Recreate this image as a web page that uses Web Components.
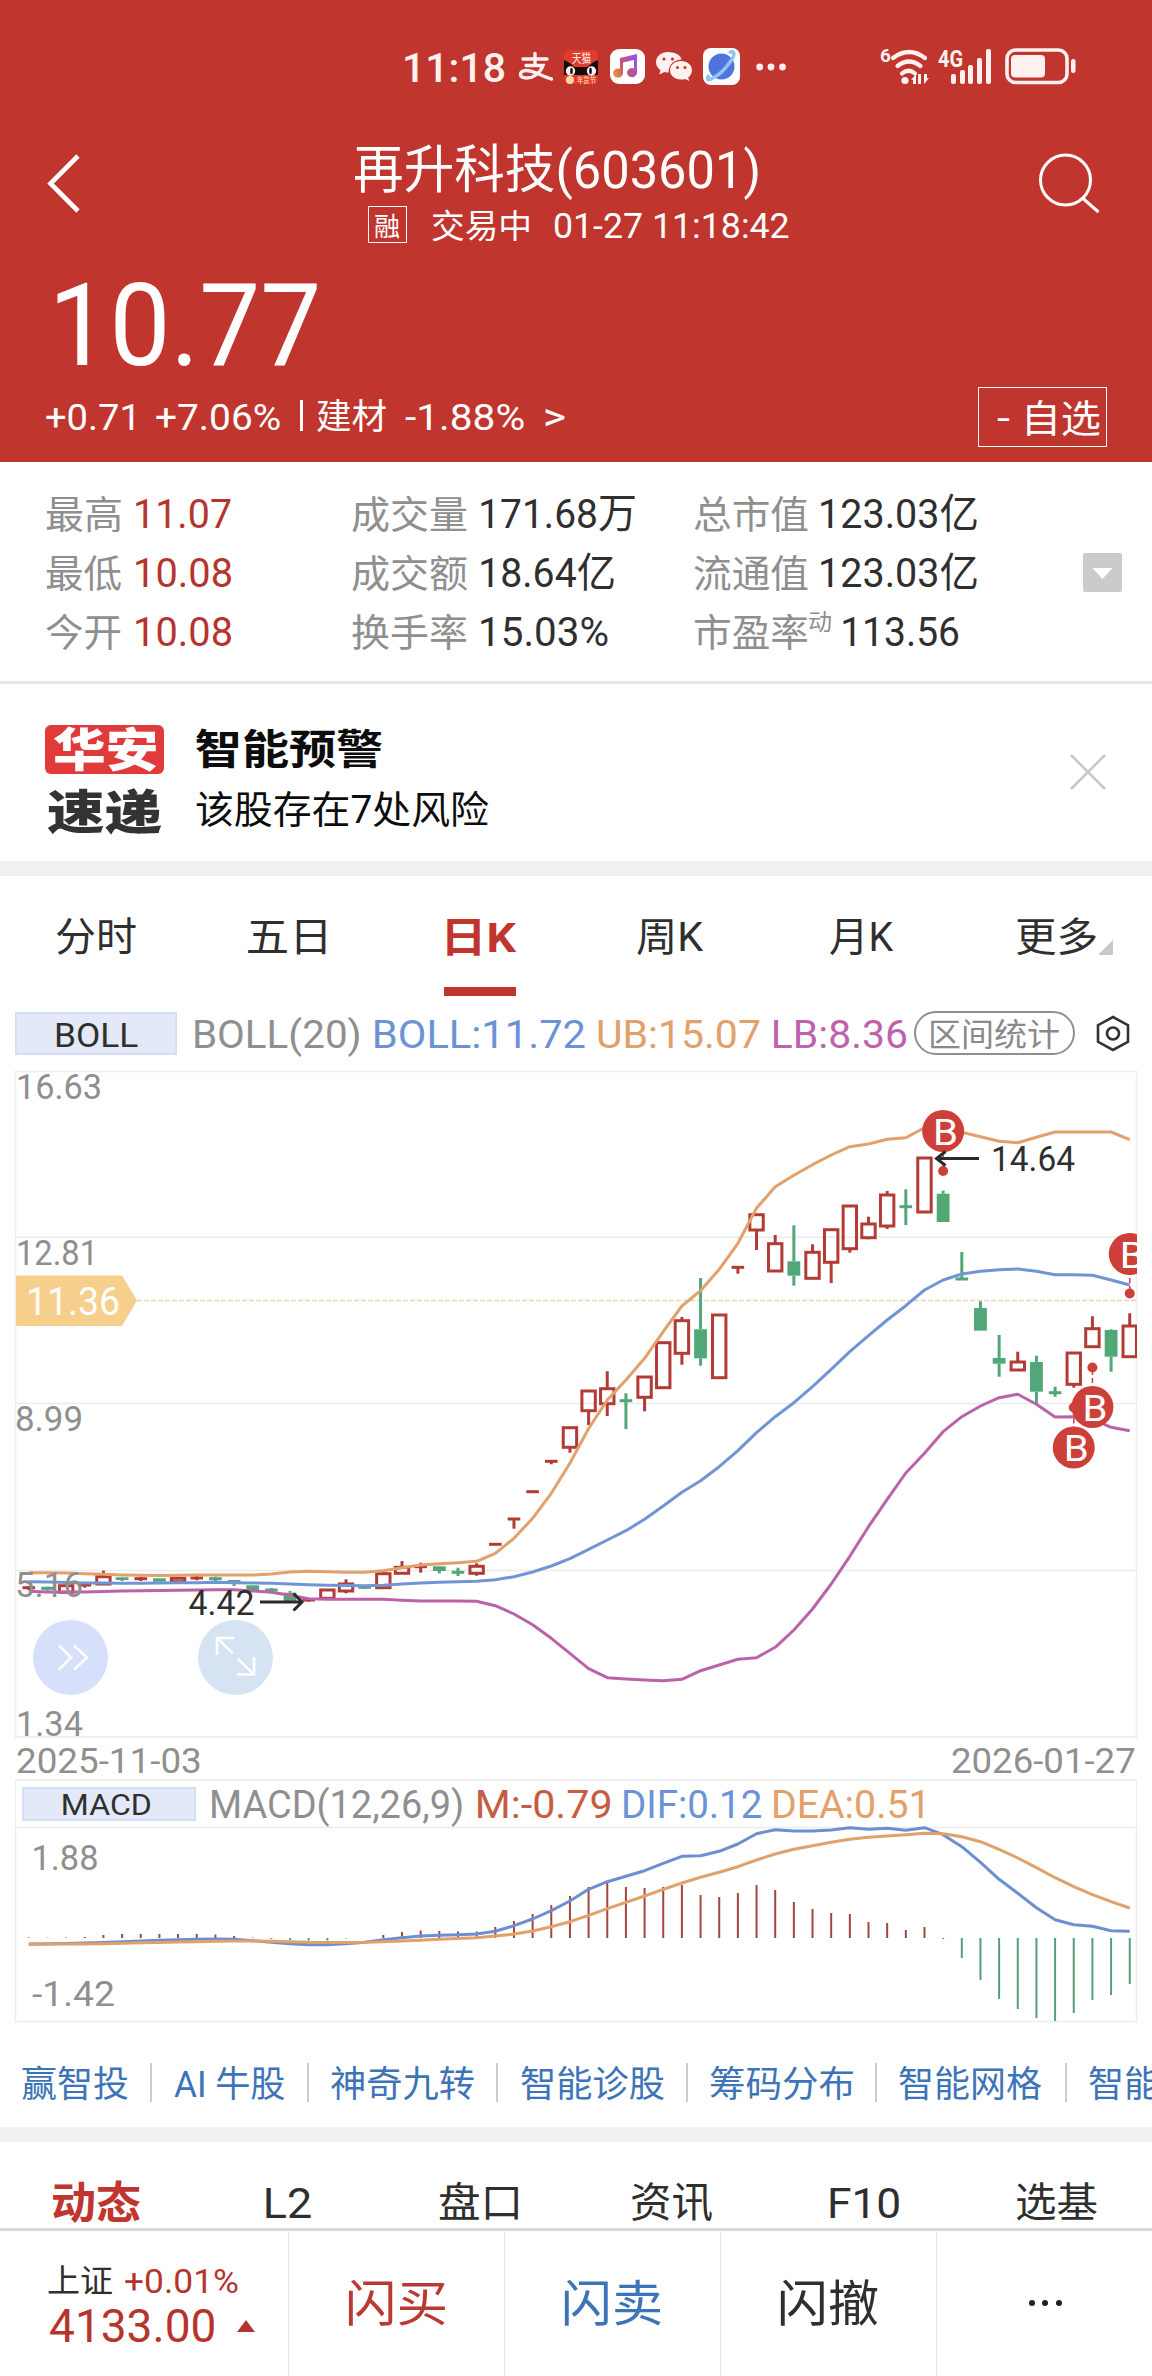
<!DOCTYPE html>
<html lang="zh-CN">
<head>
<meta charset="utf-8">
<title>再升科技(603601)</title>
<style>
  html,body{margin:0;padding:0;background:#fff}
  body{width:1152px;height:2376px;overflow:hidden;font-family:Roboto,"Noto Sans CJK SC",sans-serif;color:#2f2f2f}
</style>
</head>
<body>
<stock-page></stock-page>
<script>
const BASE = `*,*::before,*::after{box-sizing:border-box} svg{display:block;flex:none;overflow:visible} .row{display:flex;align-items:center}`;
const measure = document.createElement("canvas").getContext("2d");

// Shorthand for a fitted label: text, ink width, font size, left gap, extra style.
const t = (text, w, size, gap = 0, css = "") =>
  `<fit-text w="${w}" style="font-size:${size}px;margin-left:${gap}px;${css}">${text}</fit-text>`;

/** <fit-text w="120"> — single line of text whose ink fills exactly w pixels. */
class FitText extends HTMLElement {
  constructor() { super(); this.attachShadow({ mode: "open" }); }
  connectedCallback() {
    this.shadowRoot.innerHTML = `
      <style>
        :host{display:block;flex:none;line-height:1;height:1em;width:var(--w)}
        span{display:block;width:max-content;white-space:nowrap;transform-origin:0 50%}
      </style><span><slot></slot></span>`;
    const w = +this.getAttribute("w");
    const cs = getComputedStyle(this);
    measure.font = `${cs.fontWeight} ${cs.fontSize} ${cs.fontFamily}`;
    const m = measure.measureText(this.textContent);
    const ink = m.actualBoundingBoxLeft + m.actualBoundingBoxRight;
    this.style.setProperty("--w", w + "px");
    // 1.5px down: Roboto sits a little high in its line box
    this.shadowRoot.querySelector("span").style.transform = `translateY(1.5px) scaleX(${w / ink}) translateX(${m.actualBoundingBoxLeft}px)`;
  }
}
customElements.define("fit-text", FitText);

class Block extends HTMLElement {
  constructor() { super(); this.attachShadow({ mode: "open" }); }
  connectedCallback() { this.shadowRoot.innerHTML = `<style>${BASE}${this.css()}</style>${this.html()}`; }
  css() { return ":host{display:block}"; }
  html() { return "<slot></slot>"; }
}

class StatusBar extends Block {
  css() { return `:host{display:block;height:134px;color:#fff1ef} svg{width:1152px;height:134px}`; }
  html() {
    return `<svg viewBox="0 0 1152 134" fill="#fff1ef">
      <text x="402" y="81.500" font-size="41" font-weight="500" textLength="104" lengthAdjust="spacingAndGlyphs">11:18</text>
      <g fill="none" stroke="#fff1ef" stroke-width="3.4" stroke-linecap="round">
        <path d="M523 59h24M535 53.500v12M526 65.500h17c-3 8-10 12.500-16 12.500c-9 0-8-7.500-1-7.500c8 0 16 6 25.500 8.500" /></g>
      <g><rect x="564" y="50" width="34" height="34" rx="5" fill="#e23b2c"/>
        <text x="572" y="63" font-size="12" textLength="19" lengthAdjust="spacingAndGlyphs">天猫</text>
        <path d="M564 60q7 3 10 7h14q3-4 10-7v15h-34z" fill="#130d0d"/>
        <circle cx="570.500" cy="71" r="4.700"/><circle cx="591.500" cy="71" r="4.700"/>
        <ellipse cx="571.500" cy="71" rx="1.300" ry="3.200" fill="#111"/><ellipse cx="590.500" cy="71" rx="1.300" ry="3.200" fill="#111"/>
        <circle cx="570" cy="80" r="4" fill="#f6d9a0"/>
        <text x="577" y="82.500" font-size="7.500" fill="#ffe9c9" textLength="19" lengthAdjust="spacingAndGlyphs">年货节</text></g>
      <g><defs><linearGradient id="mu" x1="0" y1="1" x2="1" y2="0.500"><stop offset="0" stop-color="#f0a040"/><stop offset=".5" stop-color="#c8546a"/><stop offset="1" stop-color="#a64fd8"/></linearGradient></defs>
        <rect x="610" y="49" width="35" height="35" rx="9" fill="#fff"/>
        <path d="M620 58l17-4v19a5 4.500 0 1 1-3-4.500v-8.500l-11 2.500v11a5 4.500 0 1 1-3-4.500z" fill="url(#mu)"/></g>
      <g><path d="M668 52c-7 0-12 4.600-12 10.300c0 3.300 1.800 6 4.500 7.900l-1.200 4.200l5-2.500c2 .5 3 .5 4.200.5c0-8 6-13 13-13c-1-4.500-6.500-7.400-13.500-7.400z"/>
        <path d="M681 61c-6.300 0-11 4-11 9.300s4.700 9.200 11 9.200c1.500 0 2.900-.2 4.200-.6l4 2.100l-1-3.500c2.400-1.700 3.800-4.300 3.800-7.200c0-5.300-4.700-9.300-11-9.300z"/>
        <g fill="#c0352e"><circle cx="664" cy="59" r="1.600"/><circle cx="672.500" cy="59" r="1.600"/><circle cx="677.500" cy="67.500" r="1.500"/><circle cx="685" cy="67.500" r="1.500"/></g></g>
      <g><rect x="703" y="48" width="37" height="37" rx="8" fill="#fff"/>
        <circle cx="721.500" cy="66.500" r="13" fill="#4f74dc"/>
        <path d="M709 75q-4 7 3 3.500q10-5 17-15q7-9 4-11.500q-1-1-4 1" fill="none" stroke="#8fc4f5" stroke-width="3.600"/></g>
      <circle cx="759.700" cy="67" r="3.400"/><circle cx="771" cy="67" r="3.400"/><circle cx="782.500" cy="67" r="3.400"/>
      <text x="880" y="62" font-size="19" font-weight="700">6</text>
      <g fill="none" stroke="#fff1ef" stroke-width="4.200" stroke-linecap="round">
        <path d="M893 58q16-12 32 0M897.500 66q11.500-9 23 0M902 73.500q6.500-5.500 13 0"/></g>
      <circle cx="905" cy="80.500" r="3.600"/>
      <path d="M911 80l5-6v10h-3v-4zM929 78l-5 6v-10h3v4zM918 74h3v10h-3z"/>
      <text x="938" y="66.500" font-size="23" font-weight="700" textLength="25" lengthAdjust="spacingAndGlyphs">4G</text>
      <g><rect x="951" y="74" width="5" height="10" rx="2"/><rect x="960" y="70" width="5" height="14" rx="2"/><rect x="968" y="65" width="5" height="19" rx="2"/><rect x="977" y="58" width="5" height="26" rx="2"/><rect x="986" y="49" width="5" height="35" rx="2"/></g>
      <rect x="1007" y="50" width="60" height="32.500" rx="8.500" fill="none" stroke="#fff1ef" stroke-width="3.600"/>
      <rect x="1011" y="55" width="34" height="22.500" rx="4"/><rect x="1071" y="59" width="4.500" height="14" rx="2.200"/>
    </svg>`;
  }
}
customElements.define("status-bar", StatusBar);

class StockHeader extends Block {
  css() {
    return `:host{display:block;height:462px;background:#c0352e;color:#fff}
      .bar{height:114px;align-items:flex-start}
      .mid{width:805px;padding-left:276px}
      .title{height:70px}.sub{height:41px}
      .tag{width:39px;height:37px;border:1px solid #fff;justify-content:center}
      .price{height:133px;padding:17px 0 0 57px}
      .chg{height:68px;padding-left:46px}
      .pick{width:129px;height:60px;margin:4px 0 0 auto;margin-right:45px;border:1px solid #fff}`;
  }
  html() {
    return `<status-bar></status-bar>
      <div class="row bar">
        <svg width="80" height="90" viewBox="0 134 80 90"><path d="M78 156L50.500 183.500L78 211" fill="none" stroke="#fff" stroke-width="4.600"/></svg>
        <div class="mid">
          <div class="row title">${t("再升科技(603601)", 403, 52, -1)}</div>
          <div class="row sub"><div class="row tag" style="margin-left:12px">${t("融", 25, 26)}</div>
            ${t("交易中", 97, 33, 25)}${t("01-27 11:18:42", 235, 35, 25)}</div>
        </div>
        <svg style="margin-left:147px" width="80" height="90" viewBox="1032 134 80 90" fill="none" stroke="#fff" stroke-width="3"><circle cx="1065.500" cy="180" r="25"/><path d="M1083 198.500l15.500 13.500"/></svg>
      </div>
      <div class="row price">${t("10.77", 260, 115)}</div>
      <div class="row chg">${t("+0.71", 88, 37)}${t("+7.06%", 124, 37, 22)}
        <svg width="3" height="31" style="margin-left:20px"><rect width="3" height="31" fill="#fff"/></svg>
        ${t("建材", 69, 35, 14)}${t("-1.88%", 119, 37, 19)}${t("&gt;", 20, 38, 21)}
        <div class="row pick">${t("-", 13, 36, 18)}${t("自选", 73, 38, 17)}</div></div>`;
  }
}
customElements.define("stock-header", StockHeader);

class QuoteStats extends Block {
  css() {
    return `:host{display:flex;align-items:center;height:222px;border-bottom:3px solid #e5e5e5;padding-top:1px}
      .grid{display:grid;grid-template-columns:306px 342px 330px;padding-left:46px;height:177px;grid-auto-rows:59px;margin-top:-1px;flex:none}
      .sup{align-self:flex-start;margin-top:8px}`;
  }
  html() {
    const g = "color:#8f8f8f", r = "color:#b5352e";
    const c = (...a) => `<div class="row">${a.join("")}</div>`;
    return `<div class="grid">
      ${c(t("最高", 75, 38, 0, g), t("11.07", 95, 41, 15, r))}${c(t("成交量", 115, 38, 0, g), t("171.68万", 154, 41, 14))}${c(t("总市值", 114, 38, 0, g), t("123.03亿", 156, 41, 13))}
      ${c(t("最低", 75, 38, 0, g), t("10.08", 95, 41, 15, r))}${c(t("成交额", 115, 38, 0, g), t("18.64亿", 133, 41, 14))}${c(t("流通值", 114, 38, 0, g), t("123.03亿", 156, 41, 13))}
      ${c(t("今开", 75, 38, 0, g), t("10.08", 95, 41, 15, r))}${c(t("换手率", 115, 38, 0, g), t("15.03%", 127, 41, 14))}${c(t("市盈率", 114, 38, 0, g), `<div class="sup">${t("动", 22, 23, 1, g)}</div>`, t("113.56", 116, 41, 12))}
    </div>
    <svg width="39" height="39" viewBox="0 0 39 39" style="margin-left:59px"><rect width="39" height="39" rx="2" fill="#cbcbcb"/><path d="M9.500 15h20l-10 11z" fill="#fff"/></svg>`;
  }
}
customElements.define("quote-stats", QuoteStats);

class AlertBanner extends Block {
  css() {
    return `:host{display:flex;align-items:flex-start;height:192px;border-bottom:15px solid #f0f0f0;color:#0d0d0d}
      .logo{width:119px;margin:41px 0 0 45px}
      .a{height:49px;background:#e03a3a;border-radius:6px;color:#fff;padding:0 0 3px 8px}
      .b{height:67px;color:#333;padding-top:6px}
      .txt{margin:35px 0 0 32px;width:874px}.txt .row{height:59px}`;
  }
  html() {
    return `<div class="logo"><div class="row a">${t("华安", 103, 46, 0, "font-weight:900")}</div>
      <div class="row b">${t("速递", 115, 47, 2, "font-weight:900")}</div></div>
      <div class="txt"><div class="row">${t("智能预警", 186, 41, 0, "font-weight:700")}</div><div class="row">${t("该股存在7处风险", 293, 38)}</div></div>
      <svg width="36" height="36" viewBox="0 0 36 36" style="margin-top:70px" stroke="#c9c9c9" stroke-width="2.600"><path d="M1 1L35 35M35 1L1 35"/></svg>`;
  }
}
customElements.define("alert-banner", AlertBanner);

class PeriodTabs extends Block {
  css() {
    return `:host{display:grid;grid-template-columns:repeat(6,192px);height:120px}
      .tab{display:flex;justify-content:center;align-items:center;height:120px;position:relative}
      .on{color:#c0352e;font-weight:700}
      .on::after{content:"";position:absolute;left:60px;bottom:0;width:72px;height:9px;background:#c0352e}
      .more svg{position:absolute;left:138px;bottom:41px}`;
  }
  html() {
    return `<div class="tab">${t("分时", 80, 40)}</div><div class="tab">${t("五日", 78, 40, -3)}</div>
      <div class="tab on">${t("日K", 70, 41, 3)}</div><div class="tab">${t("周K", 67, 40, -4)}</div>
      <div class="tab">${t("月K", 64, 40, -4)}</div>
      <div class="tab more">${t("更多", 80, 40)}<svg width="15" height="15"><path d="M15 0V15H0z" fill="#c9c9c9"/></svg></div>`;
  }
}
customElements.define("period-tabs", PeriodTabs);

class BollLegend extends Block {
  css() {
    return `:host{display:flex;align-items:center;height:70px;padding:4px 0 0 15px}
      .box{width:162px;height:43px;background:#e3e9f6;border:2px solid #d3def2;justify-content:center}
      .pill{width:161px;height:44px;border:2px solid #8f8f8f;border-radius:22px;justify-content:center;color:#8a8a8a;margin-left:7px}`;
  }
  html() {
    return `<div class="row box">${t("BOLL", 82, 34, 2)}</div>
      ${t("BOLL(20)", 164, 39, 18, "color:#8f8f8f")}${t("BOLL:11.72", 210, 39, 16, "color:#6c92d6")}
      ${t("UB:15.07", 162, 39, 13, "color:#e2a06b")}${t("LB:8.36", 133, 39, 14, "color:#bd62ab")}
      <div class="row pill">${t("区间统计", 128, 32)}</div>
      <svg width="34" height="37" viewBox="0 0 34 37" style="margin-left:21px" fill="none" stroke="#333" stroke-width="2.600"><path d="M17 2L32 10.200V26.800L17 35L2 26.800V10.200z"/><circle cx="17" cy="18.500" r="6"/></svg>`;
  }
}
customElements.define("boll-legend", BollLegend);

const X = (i) => 28.8 + 18.66 * i;
const line = (ys, color, w = 3) =>
  `<polyline fill="none" stroke="${color}" stroke-width="${w}" stroke-linejoin="round" points="${ys.map((y, i) => X(i).toFixed(1) + "," + y).join(" ")}"/>`;
const RED = "#b23b35", GREEN = "#52a778", GREY = "#8f8f8f";
const label = (x, y, w, size, text, fill = GREY) =>
  `<text x="${x}" y="${y}" font-size="${size}" fill="${fill}" textLength="${w}" lengthAdjust="spacingAndGlyphs">${text}</text>`;

// [kind, body top, body bottom, high, low]; kinds: r rising, g falling
const CANDLES = [
  ["r",1587.7,1587.7,1586,1590],["g",1588.3,1588.3,1586.7,1590.7],["r",1585.7,1592.3],["r",1585,1585,1583.3,1587.7],["r",1576.7,1584,1570.7],
  ["g",1577.3,1580,1577,1581],["r",1578.7,1578.7,1576.7,1581],["g",1578.3,1581.7],["r",1578.3,1581.7],["r",1578,1578,1575,1580.3],
  ["g",1578.7,1578.7,1576.7,1581],["g",1580,1584,1580,1586],["g",1585.3,1590.3],["g",1590,1590,1588.3,1591.7],["g",1592.7,1601.3,1591],
  ["r",1600,1600,1598.3,1601.7],["r",1590,1598.3],["r",1584,1591,1579.3,1593.3],["g",1587.3,1587.3,1586,1588.7],["r",1573.7,1587.7,1571.3],
  ["r",1567.3,1573.3,1561],["r",1566.7,1566.7,1562.7,1572.7],["g",1566.3,1571,1566,1573.3],["g",1572.3,1572.3,1567.7,1576],["r",1566.3,1573.3,1563.3,1575.7],
  ["r",1544.3,1544.3],["r",1519,1519,1519,1528.7],["r",1491.7,1491.7],["r",1461.3,1461.3,1461,1464.3],["r",1427.7,1447.3,1427.7,1452.7],
  ["r",1391,1410.7,1391,1425],["r",1388.7,1403.7,1371.3,1416],["g",1400.7,1400.7,1393.3,1429],["r",1377,1397.3,1377,1411.3],["r",1342.7,1387.7],
  ["r",1320.7,1353.3,1317,1364.7],["g",1329.3,1358.3,1278,1365.7],["r",1315,1377.7],["r",1267.3,1267.3,1267,1273.7],["r",1214.7,1230,1214.7,1250],
  ["r",1243.7,1271,1235],["g",1261.3,1275.7,1225.3,1285.7],["r",1252.3,1278.3,1244.3],["r",1229.7,1262.3,1229.7,1283],["r",1206,1248.7,1206,1252.7],
  ["r",1224,1237.7,1216.7,1239.3],["r",1195,1226,1191,1229],["g",1206.7,1206.7,1189.3,1225],["r",1158,1212],["g",1193.7,1222,1190.7],
  ["g",1279,1279,1252,1280],["g",1308,1330.7,1301.3],["g",1358,1363.7,1335,1376.7],["r",1362,1370,1351.7],["g",1362,1391.7,1355.7,1403.3],
  ["g",1392.7,1392.7,1386.7,1396.7],["r",1353,1384.3,1353,1387.7],["r",1328.7,1346.7,1316.3],["g",1330,1356.7,1329.3,1371.7],["r",1326,1356.7,1313.3]
];
const UB = [1572.7,1572.8,1573,1573.7,1574.3,1575,1575.3,1575.5,1575.3,1575,1575,1575,1575,1574,1572,1571.3,1571.7,1572.3,1572.3,1570.7,1567.7,1565,1563.7,1562.7,1561.3,1553.3,1538.3,1518.3,1493.3,1463.3,1428.5,1400,1380,1358.3,1331.7,1306,1290.7,1269.3,1243.3,1208.3,1186.7,1175.3,1164.7,1155,1146.7,1144,1139.3,1137.7,1127.7,1128,1132.3,1136.7,1141.3,1142.7,1137.3,1132,1132,1132,1132,1139.7];
const MID = [1581.7,1582,1582.5,1583,1583.1,1583.2,1583.3,1583,1582.8,1582.7,1582.3,1582.7,1583,1583.3,1584,1584.7,1585.3,1585.5,1585.7,1585.3,1584,1583,1582.3,1581.7,1581.3,1579.7,1576.7,1572,1566,1558.7,1549.3,1540,1530.7,1519.3,1506,1492.3,1480.7,1466.7,1450.7,1432.7,1416.7,1402.7,1386.7,1369.3,1351.7,1335.7,1320,1305.7,1290,1280,1274,1271.3,1269.7,1269,1271.3,1274.7,1274.7,1275.3,1280,1285];
const LB = [1591.3,1592,1592,1592,1591.5,1591,1590.8,1590.5,1590.3,1590,1589.7,1589.7,1591,1592.3,1595.3,1598.7,1599.3,1599.3,1599.3,1599.3,1600.3,1601,1601,1601,1601.3,1605.7,1614,1624.7,1638.3,1653.3,1668.7,1677.7,1679,1680,1680.7,1679.3,1670.7,1665,1659.3,1657.7,1647.3,1630,1609,1584,1556.3,1526.7,1499.3,1473,1453.3,1431.7,1416.7,1406,1397.7,1394.3,1404.3,1417,1416.7,1419,1427.3,1430.7];

class KChart extends Block {
  css() { return `:host{display:block;height:674px}`; }
  candle([kind, a, b, hi = a, lo = b], i) {
    const x = X(i), c = kind === "r" ? RED : GREEN;
    let s = "";
    if (hi < a) s += `<path d="M${x} ${hi}V${a}" stroke="${c}" stroke-width="3"/>`;
    if (lo > b) s += `<path d="M${x} ${b}V${lo}" stroke="${c}" stroke-width="3"/>`;
    if (a === b) return s + `<path d="M${x - 6.3} ${a}H${x + 6.3}" stroke="${c}" stroke-width="3"/>`;
    return s + (kind === "r"
      ? `<rect x="${x - 6.7}" y="${a}" width="13.4" height="${b - a}" fill="none" stroke="${c}" stroke-width="3"/>`
      : `<rect x="${x - 6.4}" y="${a}" width="12.8" height="${b - a}" fill="${c}"/>`);
  }
  mark(x, y, dotY) {
    return `<path d="M${x} ${y}V${dotY}" stroke="#cd4039" stroke-width="1.500" stroke-dasharray="5 3"/><circle cx="${x}" cy="${dotY}" r="5" fill="#cd4039"/>
      <circle cx="${x}" cy="${y}" r="21" fill="#cd4039"/>${label(x - 10, y + 13.5, 25, 37, "B", "#fff")}`;
  }
  html() {
    return `<svg width="1152" height="674" viewBox="0 1066 1152 674">
      <clipPath id="c"><rect x="15" y="1066" width="1122" height="674"/></clipPath>
      <path d="M15.500 1737V1071.500H1136.500V1737" fill="none" stroke="#efefef" stroke-width="1.500"/>
      <path d="M15 1237.300H1137M15 1403.500H1137M15 1570.500H1137M15 1737H1137" stroke="#ebebeb" stroke-width="1.600"/>
      <path d="M137 1300.500H1137" stroke="#efd3b8" stroke-width="1.600" stroke-dasharray="5 2"/>
      <g clip-path="url(#c)">${CANDLES.map((c, i) => this.candle(c, i)).join("")}
        ${line(UB, "#e2a06b")}${line(MID, "#7195d4")}${line(LB, "#bb62a9")}
        ${this.mark(X(59), 1254, 1293.5)}${this.mark(X(56), 1447.5, 1407.5)}${this.mark(X(57), 1407, 1367.5)}</g>
      ${this.mark(X(49), 1131, 1171)}
      <g fill="none" stroke="#2b2b2b" stroke-width="3"><path d="M979 1158.500H936M945.500 1151.500L936.500 1158.500L945.500 1165.500"/><path d="M260 1602H302M293.500 1593.500L302 1602L293.500 1610.500"/></g>
      ${label(991, 1171, 84, 35, "14.64", "#2f2f2f")}${label(188.500, 1615, 66, 35, "4.42", "#2f2f2f")}
      ${label(16, 1099, 86, 35, "16.63")}${label(16, 1265, 82, 35, "12.81")}${label(15, 1431, 68, 35, "8.99")}
      ${label(15, 1596.500, 68, 35, "5.16")}${label(16, 1736, 67, 35, "1.34")}
      <path d="M16 1275.500H122L137 1300.500L122 1326H16z" fill="#f6cf8c"/>${label(26, 1315, 94, 39, "11.36", "#fff")}
      <circle cx="70.500" cy="1657.500" r="37.500" fill="#d6e0fb"/><circle cx="235.500" cy="1657.500" r="37.500" fill="#d6e3f2"/>
      <g fill="none" stroke="#fff" stroke-width="2.600"><path d="M59 1645.500L71 1657.500L59 1669.500M74 1645.500L87 1657.500L74 1669.500"/>
        <path d="M217 1655V1638H234M217 1638L233 1653.500M254 1657V1674.500H237M254 1674.500L238 1659"/></g>
    </svg>`;
  }
}
customElements.define("k-chart", KChart);

class DateAxis extends Block {
  css() { return `:host{display:flex;justify-content:space-between;align-items:center;height:39px;padding:1px 17px;color:#8f8f8f}`; }
  html() { return t("2025-11-03", 183, 35) + t("2026-01-27", 183, 35); }
}
customElements.define("date-axis", DateAxis);

class MacdLegend extends Block {
  css() {
    return `:host{display:flex;align-items:center;height:48px;margin:0 15px;border:1px solid #efefef;border-top-width:2px;border-bottom:0;padding-left:6px}
      .box{width:174px;height:34px;background:#e3e9f6;border:2px solid #d3dff5;justify-content:center}
      fit-text{position:relative;top:-1px}`;
  }
  html() {
    return `<div class="row box">${t("MACD", 87, 30, -6)}</div>${t("MACD(12,26,9)", 250, 38, 16, "color:#8f8f8f")}
      ${t("M:-0.79", 132, 38, 16, "color:#c65c41")}${t("DIF:0.12", 137, 38, 14, "color:#6c92d6")}${t("DEA:0.51", 149, 38, 13, "color:#e2a06b")}`;
  }
}
customElements.define("macd-legend", MacdLegend);

const HIST = [.5,.3,.5,1,3,4,4,4,4,4,3.5,2,.5,-1,-2,-2.5,-2.5,-.5,0,3,6,7.5,7,6.5,6.5,11,17,24,33,42,51,55,51,50,51,53,43,41,45,53,48,36,29,25,24,16,15,8,11,-1,-20,-42,-61,-71,-80,-83,-75,-62,-57,-46];
const DIF = [1944,1943.8,1943.5,1943,1942.4,1941.7,1941,1940.3,1939.8,1939.3,1939,1939.3,1940.7,1942.3,1943.7,1944.7,1944.7,1943.7,1942.3,1939.7,1937.7,1936,1935.3,1934.7,1934,1931.3,1925.7,1919,1910.7,1901,1889.3,1881.7,1876.3,1870.7,1863.3,1856.3,1855.7,1851.3,1844,1833.7,1829.7,1831,1831,1830,1827.7,1829.3,1828.3,1830.3,1827.7,1834.7,1846.7,1862.3,1879.3,1893.3,1907.7,1919.7,1924.7,1926.3,1930.7,1931.3];
const DEA = [1944.3,1944.2,1944,1943.9,1943.7,1943.3,1942.8,1942.4,1942,1941.7,1941.3,1941,1941,1941.3,1941.7,1942.3,1942.4,1942.4,1942.3,1941.7,1941,1940.2,1939.3,1938.5,1937.7,1936,1934,1931,1926.7,1921.7,1915.3,1908.7,1902.3,1896,1889.3,1883,1877.3,1872.3,1866.7,1860,1854,1849.3,1845.7,1842.3,1839.3,1837.3,1836,1834.7,1833.3,1833.7,1836.7,1841.7,1849.3,1858,1867.7,1877.7,1886.7,1894.7,1901.7,1908];

class MacdChart extends Block {
  css() { return `:host{display:block;height:196px}`; }
  html() {
    const bars = HIST.map((h, i) => `<path d="M${X(i)} 1938V${1938 - h}" stroke="${h > 0 ? "#a8443f" : "#559e77"}" stroke-width="2"/>`).join("");
    return `<svg width="1152" height="196" viewBox="0 1827 1152 196">
      <path d="M15.500 1827.500H1136.500V2021.500H15.500z" fill="none" stroke="#ececec" stroke-width="1.500"/>
      ${bars}${line(DIF, "#6c8fd2")}${line(DEA, "#e2a06b")}
      ${label(31.500, 1870, 67, 35, "1.88")}${label(32, 2006, 83, 35, "-1.42")}</svg>`;
  }
}
customElements.define("macd-chart", MacdChart);

class LinkStrip extends Block {
  css() {
    return `:host{display:flex;align-items:center;height:119px;border-bottom:15px solid #f0f0f0;padding:15px 0 0 22px;overflow:hidden;color:#3d74b8}
      i{flex:none;width:2px;height:39px;background:#ccc;margin:0 22.200px}`;
  }
  html() {
    return [["赢智投", 106], ["AI 牛股", 110.5], ["神奇九转", 143], ["智能诊股", 143], ["筹码分布", 143], ["智能网格", 143], ["智能", 70]]
      .map(([s, w]) => t(s, w, 36)).join("<i></i>");
  }
}
customElements.define("link-strip", LinkStrip);

class InfoTabs extends Block {
  css() {
    return `:host{display:grid;grid-template-columns:repeat(6,192px);height:89px;border-bottom:3px solid #d8d8d8}
      div{display:flex;justify-content:center;align-items:center;padding-top:33px}
      .on{color:#c0352e;font-weight:700}`;
  }
  html() {
    return `<div class="on">${t("动态", 87, 44)}</div><div>${t("L2", 45, 43)}</div><div>${t("盘口", 79, 41, -3)}</div>
      <div>${t("资讯", 80, 41)}</div><div>${t("F10", 69, 43)}</div><div>${t("选基", 81, 41)}</div>`;
  }
}
customElements.define("info-tabs", InfoTabs);

class TradeBar extends Block {
  css() {
    return `:host{display:grid;grid-template-columns:288px repeat(4,216px);height:145px}
      .cell{display:flex;align-items:center;justify-content:center;border-left:1px solid #e4e4e4;padding-bottom:2px}
      .idx{padding:29px 0 0 48px}.idx .row{height:38px}.idx .v{height:50px;color:#b5352e}`;
  }
  html() {
    return `<div class="idx"><div class="row">${t("上证", 64, 32)}${t("+0.01%", 113, 34, 13, "color:#b5352e")}</div>
        <div class="row v">${t("4133.00", 164, 47, 2)}<svg width="18" height="12" style="margin-left:23px;margin-top:5px"><path d="M9 0L18 12H0z" fill="#b5352e"/></svg></div></div>
      <div class="cell">${t("闪买", 97, 49, 0, "color:#b83a33")}</div><div class="cell">${t("闪卖", 97, 49, 0, "color:#3d74b8")}</div>
      <div class="cell">${t("闪撤", 98, 49)}</div>
      <div class="cell"><svg width="34" height="8" fill="#222"><circle cx="4" cy="4" r="3"/><circle cx="17" cy="4" r="3"/><circle cx="31" cy="4" r="3"/></svg></div>`;
  }
}
customElements.define("trade-bar", TradeBar);

class StockPage extends Block {
  css() { return `:host{display:flex;flex-direction:column;width:1152px;height:2376px;overflow:hidden;background:#fff} :host *{flex:none}`; }
  html() {
    return `<stock-header></stock-header><quote-stats></quote-stats><alert-banner></alert-banner><period-tabs></period-tabs>
      <boll-legend></boll-legend><k-chart></k-chart><date-axis></date-axis><macd-legend></macd-legend><macd-chart></macd-chart>
      <link-strip></link-strip><info-tabs></info-tabs><trade-bar></trade-bar>`;
  }
}
customElements.define("stock-page", StockPage);
</script>
</body>
</html>
